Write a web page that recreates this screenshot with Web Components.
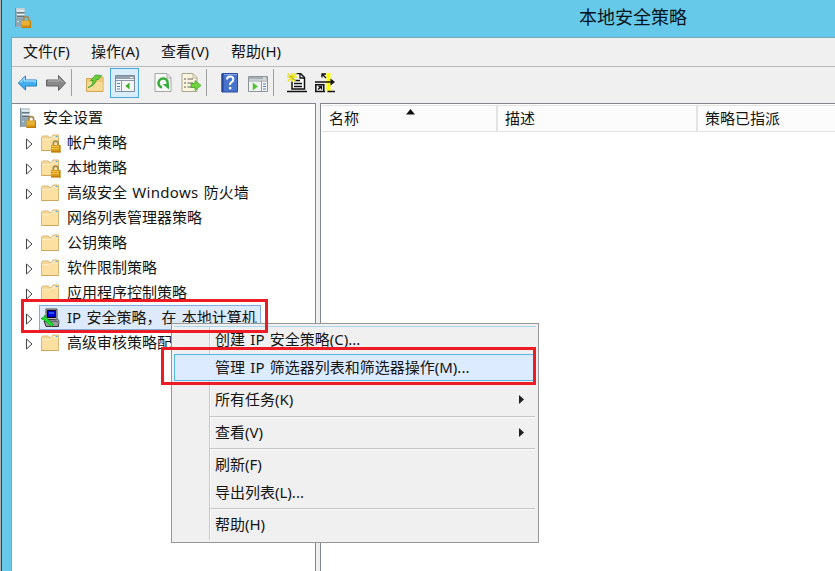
<!DOCTYPE html>
<html lang="zh-CN">
<head>
<meta charset="utf-8">
<title>本地安全策略</title>
<style>
    body {
        margin: 0;
        overflow: hidden;
        font: 15px/25px "Noto Sans", "Noto Sans CJK SC", sans-serif;
        word-spacing: 1.4px;
        color: #141414;
    }
    .latin {
        letter-spacing: .3px;
    }
</style>
</head>
<body>
<mmc-window caption="本地安全策略">
    <menu-bar slot="menu">
        <span>文件(F)</span><span>操作(A)</span><span>查看(V)</span><span>帮助(H)</span>
    </menu-bar>
    <tool-bar slot="tools"></tool-bar>
    <policy-tree slot="tree">
        <tree-item icon="server" root>安全设置</tree-item>
        <tree-item icon="folderlock" expandable>帐户策略</tree-item>
        <tree-item icon="folderlock" expandable>本地策略</tree-item>
        <tree-item icon="folder" expandable>高级安全 <span class="latin">Windows</span> 防火墙</tree-item>
        <tree-item icon="folder">网络列表管理器策略</tree-item>
        <tree-item icon="folder" expandable>公钥策略</tree-item>
        <tree-item icon="folder" expandable>软件限制策略</tree-item>
        <tree-item icon="folder" expandable>应用程序控制策略</tree-item>
        <tree-item icon="ipsec" expandable selected>IP 安全策略，在 本地计算机</tree-item>
        <tree-item icon="folder" expandable>高级审核策略配置</tree-item>
    </policy-tree>
    <list-header slot="list">
        <span>名称</span><span>描述</span><span>策略已指派</span>
    </list-header>
</mmc-window>
<context-menu>
    <menu-item>创建 IP 安全策略(C)...</menu-item>
    <menu-item active>管理 IP 筛选器列表和筛选器操作(M)...</menu-item>
    <menu-line></menu-line>
    <menu-item submenu>所有任务(K)</menu-item>
    <menu-line></menu-line>
    <menu-item submenu>查看(V)</menu-item>
    <menu-line></menu-line>
    <menu-item>刷新(F)</menu-item>
    <menu-item>导出列表(L)...</menu-item>
    <menu-line></menu-line>
    <menu-item>帮助(H)</menu-item>
</context-menu>
<mark-box style="left:21px;top:299px;width:247px;height:34px"></mark-box>
<mark-box style="left:161px;top:347px;width:375px;height:38px"></mark-box>

<script>
const lock = `
    <path d="M12.300 12.500V10.500a2.400 2.400 0 0 1 4.800 0v2" fill="none" stroke="#a58b4d" stroke-width="1.700"/>
    <path d="M10 12h9.500v7.500H10z" fill="#d99b1c"/>
    <path d="M10.500 13.500h8.500M10.500 15.500h8.500" stroke="#f5c64d"/>
    <path d="M10 18.800h9.500M18.800 12v7.500" stroke="#b77607"/>`

const folder = `
    <path d="M.5 4.500 1.500 3h6l1 1.500h2L12 2h5.500V17.500H.5z" fill="#f5d898" stroke="#d9b878"/>
    <path d="M1 7h7.500l2-1.500H17V17H1z" fill="#fbe0a2"/>
    <path d="M1 6.500h7.500l2-1.500H17" fill="none" stroke="#fff0c8"/>
    <path d="M12.500 3.500h4" stroke="#fff"/><path d="M14.500 3.500h2" stroke="#4ba5df"/>
    <path d="M.5 17.500h17" stroke="#cfa75a"/>`

const icons = {
    server: `
        <path d="M0 0h9.500v19H0z" fill="#9badb8"/>
        <path d="M0 0h9.500v3H0z" fill="#c4d0d8"/>
        <path d="M2 3h7.500M2 6.500h7.500" stroke="#eef5f8" stroke-width="1.500"/>
        <path d="M2 4.800h7.500M2 8.300h7.500" stroke="#56646d"/>
        <path d="M.5 0v19" stroke="#7d8f9a"/><path d="M1 10h8v8H1z" fill="#8fa5b2"/>
        <path d="M2 13.500h2" stroke="#bdeafa"/>
        <g transform="translate(-3.500 .5)">${lock}</g>`,
    folder,
    folderlock: folder + lock,
    ipsec: `
        <path d="M5 1h11v10.500H5z" fill="#b9bbbc" stroke="#444"/>
        <path d="M6.500 2.500h8v7h-8z" fill="#0000d8" stroke="#000"/>
        <path d="M8 4h5v2H8z" fill="#2656ff"/>
        <path d="M3 13h12.500l2 2v3.500H5z" fill="#999b9e" stroke="#333"/>
        <path d="M14 12.500c3.500-2 4.500 0 3.500 4" fill="none" stroke="#777" stroke-width="1.500"/>
        <path d="M0 10.500 3 9l1-2 1.500 3 1.500 1.500 5.500 5-2 2-5.500-5L3 12z" fill="#18e32a" stroke="#08951a" stroke-width=".7"/>`,
    back: `<path d="M.3 10 7.500 3v4h11v6h-11v4z" fill="#43adf0" stroke="#237cc0" stroke-linejoin="round"/>
        <path d="M2 9.500 6.500 5.500v2.500h11v2" fill="none" stroke="#99dcff" stroke-width="1.300"/>`,
    forward: `<path d="M19.500 10 12.500 2.500v4.500H.5v6h12v4.500z" fill="#898989" stroke="#626262" stroke-linejoin="round"/>
        <path d="M2 8h11V5.500l4 4" fill="none" stroke="#b8b8b8"/>`,
    up: `<path d="M1.500 5.500h7l1-1.500h8.500v14.500H1.500z" fill="#f2cd79" stroke="#d1a95a"/>
        <path d="M2.500 9h15v8.500h-15z" fill="#f9dd97"/>
        <path d="M3 14.500q5-2 5-7H5.500L10.500 2l6 .5-3 4h-2q-1 6-8.500 8z" fill="#69ce37" stroke="#3c9b27" stroke-width=".8"/>`,
    panel: `<path d="M.5 2.500h19v16H.5z" fill="#f3f5f6" stroke="#7d8c99"/>
        <path d="M1 3h18v3H1z" fill="#91a1af"/><path d="M1 7.500h18M6.500 8v10" stroke="#8b98a3"/>
        <path d="M2 10.500h3M2 13.500h3M2 16h3" stroke="#458bc2"/>
        <path d="M14.500 9.500v7l-4-3.500z" fill="#3cad23"/><path d="M15 4.500h3" stroke="#fff"/>`,
    refresh: `<path d="M2 .5h12l4 4V18.500H2z" fill="#f8f8f7" stroke="#a6a6a6"/>
        <path d="M14 1v4h4" fill="none" stroke="#a6a6a6"/>
        <path d="M9 14.500A4.600 4.600 0 1 1 14.500 11.500" fill="none" stroke="#35ad3a" stroke-width="2.500"/>
        <path d="m9.500 11 6.500 0v5.500z" fill="#35ad3a"/>`,
    export: `<path d="M1 .5h11l4 4V18.500H1z" fill="#fbf5df" stroke="#aaa58f"/>
        <path d="M12 1v4h4" fill="none" stroke="#bbb491"/>
        <path d="M3 6h2m1.500 0H12M3 10h2m1.500 0H12M3 14h2m1.500 0H12" stroke="#66615b" stroke-width="1.200"/>
        <path d="M10 10.500h4V7.500l6 5-6 5v-3h-4z" fill="#70d33e" stroke="#45a626" stroke-width=".8"/>`,
    help: `<path d="M2 .5h15.500v18.500H2z" fill="#4773cd" stroke="#2d4ba0"/>
        <path d="M2.500 1v18" stroke="#24479b" stroke-width="2"/><path d="M4 1.500h13" stroke="#88a7e7"/>
        <path d="M7 6.500q0-3 3.200-3T13.300 6.500q0 1.500-1.800 2.700T10 12.200" fill="none" stroke="#fff" stroke-width="2"/>
        <path d="M9 14h2.300v2.300H9z" fill="#fff"/>`,
    action: `<path d="M.5 3.500h19v15H.5z" fill="#f3f4f4" stroke="#8d9499"/>
        <path d="M1 4h18v2.500H1z" fill="#a7b0b7"/><path d="M1 8h18M13.500 8v10" stroke="#929ca3"/>
        <path d="M5 10v7l4.500-3.500z" fill="#4bc332" stroke="#4bc332" stroke-width=".5"/>
        <path d="M15 11h3M15 13.500h3M15 16h3" stroke="#4c83c5"/><path d="M15 5h3" stroke="#fff"/>`,
    create: `<path d="M5 8v8h12.500V4.500L13.500.500H9" fill="#fff" stroke="#111" stroke-width="1.500"/>
        <path d="M13 1v4h4M7 7.500h6M7 10.500h8M7 13.500h8" fill="none" stroke="#111" stroke-width="1.300"/>
        <path d="M0 18.500h20" stroke="#111" stroke-width="1.500"/>
        <path d="M5 0v9M.5.500l8 7.500M9.500 0 1 8M0 4h10" stroke="#e9e213" stroke-width="1.500"/>
        <path d="M3.500 3l1 1m1 1 1.500 1.500" stroke="#666"/>`,
    manage: `<path d="M11.500 0h4v18h-4z" fill="#ff0"/>
        <path d="M0 9h17M0 18.500h10M12.500 18.500h7.500M.8 11v8M8.800 11v8M0 11.800h9" stroke="#111" stroke-width="1.500"/>
        <path d="M15.500 5.500v7l4.500-3.500z" fill="#111"/>
        <path d="m3 16.500 3.500-3M3.500 13.500h3v3M7 4.500V1h4M7 1l4 4" fill="none" stroke="#111" stroke-width="1.300"/>`
}

const svg = (name, size = 20) => `<svg width="${size}" height="${size}" viewBox="0 0 20 20">${icons[name]}</svg>`

function render(el, html) {
    const template = document.createElement('template')
    template.innerHTML = html
    el.attachShadow({ mode: 'open' }).appendChild(template.content.cloneNode(true))
}

class MmcWindow extends HTMLElement {
    connectedCallback() {
        render(this, `
            <style>
            :host {
                box-sizing: border-box;
                display: grid;
                grid-template-rows: 37px 1fr;
                height: 571px;
                padding-left: 11px;
                background: linear-gradient(90deg, #b0b0b0 0 1px, #38444a 1px 2px, #67c9ea 2px);
            }
            header {
                display: grid;
                grid-template-columns: 20px 1fr;
                align-items: center;
                padding: 0 148px 2px 4px;
                font-size: 18px;
                color: #07151b;
                text-align: right;
            }
            header svg {
                display: block;
            }
            .frame {
                display: grid;
                grid-template-rows: 28px 37px 1fr;
                border: solid #78a7ba;
                border-width: 1px 0 0 1px;
                background: #f0f0f0;
            }
            .panes {
                display: grid;
                grid-template-columns: 304px 1fr;
                column-gap: 4px;
            }
            .pane {
                border: 1px solid #828790;
                border-left-width: 0;
                border-bottom: 0;
                background: #fff;
                overflow: hidden;
            }
            .pane + .pane {
                border-left-width: 1px;
                border-right: 0;
            }
            </style>
            <header>${svg('server')}<span>${this.getAttribute('caption')}</span></header>
            <div class="frame">
                <slot name="menu"></slot>
                <slot name="tools"></slot>
                <div class="panes">
                    <div class="pane"><slot name="tree"></slot></div>
                    <div class="pane"><slot name="list"></slot></div>
                </div>
            </div>
        `)
    }
}

class MenuBar extends HTMLElement {
    connectedCallback() {
        render(this, `
            <style>
            :host {
                display: grid;
                grid-template-columns: 68px 70px 70px 70px;
                align-items: center;
                padding: 0 0 2px 11px;
                white-space: nowrap;
            }
            </style>
            <slot></slot>
        `)
    }
}

class ToolBar extends HTMLElement {
    connectedCallback() {
        render(this, `
            <style>
            :host {
                box-sizing: border-box;
                display: flex;
                align-items: flex-start;
                gap: 8px;
                padding: 6px 0 0 6px;
                border-top: 1px solid #b9bbbd;
            }
            svg {
                display: block;
            }
            i {
                width: 1px;
                height: 27px;
                margin: -4px 5px 0 -3px;
                background: #a0a0a0;
            }
            .pressed {
                margin: -5px 6px 0 -3px;
                padding: 4px;
                border: 1px solid #48a7df;
                background: #d9edfb;
            }
            .pressed svg {
                margin-right: -1px;
            }
            </style>
            ${svg('back')}${svg('forward')}<i></i>
            ${svg('up')}<div class="pressed">${svg('panel')}</div>
            ${svg('refresh')}${svg('export')}<i></i>
            ${svg('help')}${svg('action')}<i></i>
            ${svg('create')}${svg('manage')}
        `)
    }
}

class PolicyTree extends HTMLElement {
    connectedCallback() {
        render(this, `
            <style>
            :host {
                display: flex;
                flex-direction: column;
                padding-top: 1px;
            }
            </style>
            <slot></slot>
        `)
    }
}

class TreeItem extends HTMLElement {
    connectedCallback() {
        const arrow = this.hasAttribute('expandable')
            ? `<svg width="8" height="14"><path d="M1.500 2v10L7 7z" fill="#fff" stroke="#444"/></svg>` : ''
        render(this, `
            <style>
            :host {
                display: grid;
                grid-template-columns: 13px auto;
                column-gap: 1px;
                align-items: center;
                justify-content: start;
                height: 25px;
                padding-left: 13px;
                white-space: nowrap;
            }
            :host([root]) {
                grid-template-columns: 0 auto;
                padding-left: 5px;
            }
            svg {
                display: block;
            }
            .arrow {
                padding-top: 2px;
            }
            .label {
                box-sizing: border-box;
                display: flex;
                align-items: center;
                gap: 6px;
                height: 25px;
                padding: 0 3px 0 1px;
                border: 1px solid transparent;
            }
            :host([root]) .label {
                gap: 3px;
            }
            :host([selected]) .label {
                border-color: #7eaee0;
                background: #dceafc;
            }
            </style>
            <div class="arrow">${arrow}</div>
            <div class="label">${svg(this.getAttribute('icon'))}<span><slot></slot></span></div>
        `)
    }
}

class ListHeader extends HTMLElement {
    connectedCallback() {
        render(this, `
            <style>
            :host {
                position: relative;
                display: grid;
                grid-template-columns: 176px 200px 1fr;
                height: 25px;
                margin: 1px 0 0 1px;
                border: solid #e3e3e3;
                border-width: 1px 0 1px;
                background: #fcfcfc;
            }
            ::slotted(span) {
                padding-left: 7px;
                border-right: 2px solid #e3e3e3;
            }
            ::slotted(span:last-of-type) {
                border-right: 0;
            }
            svg {
                position: absolute;
                left: 84px;
                top: 3px;
            }
            </style>
            <slot></slot>
            <svg width="9" height="6"><path d="M0 5.500 4.500 0 9 5.500z" fill="#111"/></svg>
        `)
    }
}

class ContextMenu extends HTMLElement {
    connectedCallback() {
        render(this, `
            <style>
            :host {
                position: absolute;
                left: 171px;
                top: 323px;
                box-sizing: border-box;
                width: 368px;
                height: 220px;
                padding: 2px;
                border: 1px solid #979797;
                background: #f0f0f0;
            }
            .items {
                display: flex;
                flex-direction: column;
                height: 214px;
                background: linear-gradient(90deg, transparent 35px, #c9c9c9 35px 36px, #fafafa 36px 37px, transparent 37px);
                box-shadow: inset 0 1px #a9d8ee;
            }
            </style>
            <div class="items"><slot></slot></div>
        `)
    }
}

class MenuItem extends HTMLElement {
    connectedCallback() {
        const arrow = this.hasAttribute('submenu')
            ? `<svg width="5" height="9"><path d="M0 0v9l5-4.500z" fill="#222"/></svg>` : ''
        render(this, `
            <style>
            :host {
                box-sizing: border-box;
                display: flex;
                flex: 0 0 27.500px;
                align-items: center;
                justify-content: space-between;
                padding: 0 11px 0 40px;
                border: 1px solid transparent;
                white-space: nowrap;
            }
            :host([active]) {
                border-color: #53b5e2;
                background: #dcebff;
                margin-right: 1px;
            }
            </style>
            <span><slot></slot></span>${arrow}
        `)
    }
}

class MenuLine extends HTMLElement {
    connectedCallback() {
        render(this, `
            <style>
            :host {
                box-sizing: border-box;
                flex: 0 0 5px;
                margin: 0 1px 0 36px;
                padding-top: 2px;
            }
            div {
                height: 1px;
                background: #c5c5c5;
                box-shadow: 0 1px #fafafa;
            }
            </style>
            <div></div>
        `)
    }
}

class MarkBox extends HTMLElement {
    connectedCallback() {
        render(this, `
            <style>
            :host {
                position: absolute;
                box-sizing: border-box;
                border: 3px solid #ed1c24;
            }
            </style>
        `)
    }
}

customElements.define('mmc-window', MmcWindow)
customElements.define('menu-bar', MenuBar)
customElements.define('tool-bar', ToolBar)
customElements.define('policy-tree', PolicyTree)
customElements.define('tree-item', TreeItem)
customElements.define('list-header', ListHeader)
customElements.define('context-menu', ContextMenu)
customElements.define('menu-item', MenuItem)
customElements.define('menu-line', MenuLine)
customElements.define('mark-box', MarkBox)
</script>
</body>
</html>
